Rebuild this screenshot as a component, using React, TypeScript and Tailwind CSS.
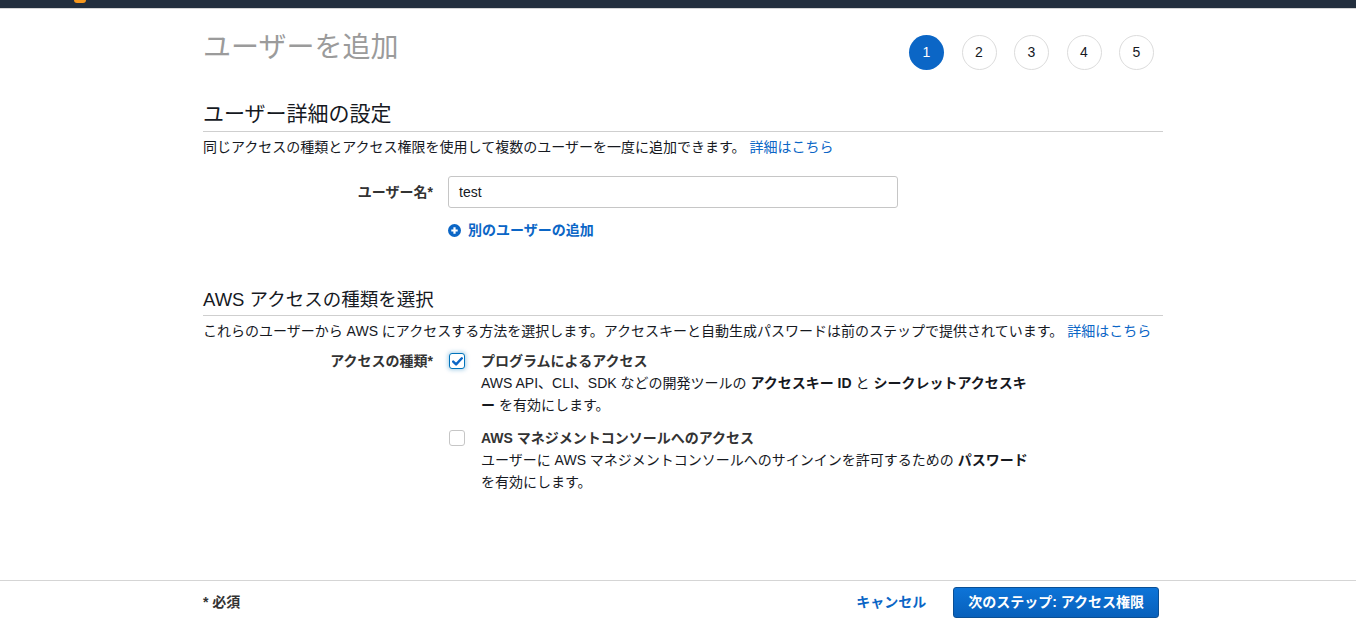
import React from 'react';

const font = { fontFamily: '"Liberation Sans", "Noto Sans CJK JP", sans-serif' };

const Step = ({ n, active }: { n: number; active?: boolean }) => (
  <div
    className={`w-[35px] h-[35px] rounded-full flex items-center justify-center text-[14px] ${
      active ? 'bg-[#0b66c6] text-white' : 'border border-[#dcdcdc] text-[#16191f] bg-white'
    }`}
  >
    {n}
  </div>
);

const Check = ({ checked }: { checked?: boolean }) =>
  checked ? (
    <div className="w-[16px] h-[16px] rounded-[3px] border border-[#0073bb] bg-white flex items-center justify-center shadow-[0_0_4px_1px_rgba(0,115,187,0.35)]">
      <svg width="11" height="9" viewBox="0 0 11 9">
        <path d="M1.2 4.6 L4.1 7.4 L9.8 1.3" fill="none" stroke="#0b66c6" strokeWidth="2.4" strokeLinecap="round" strokeLinejoin="round" />
      </svg>
    </div>
  ) : (
    <div className="w-[16px] h-[16px] rounded-[3px] border border-[#c6c6c6] bg-white" />
  );

export default function App() {
  return (
    <div className="h-[624px] flex flex-col bg-white text-[#16191f]" style={font}>
      {/* top bar */}
      <div className="h-[9px] bg-[#232f3e] border-b border-[#d5d5d5] relative">
        <div className="absolute left-[74px] top-0 w-[12px] h-[3px] rounded-b-full bg-[#f7981d]" />
      </div>

      <div className="flex-1 pl-[203px]">
        <div className="w-[960px]">
          <div className="flex justify-between items-start">
            <h1 className="mt-[22px] text-[28px] leading-[34px] text-[#9b9b9b]">ユーザーを追加</h1>
            <div className="flex gap-[17.5px] mt-[26px] mr-[9px]">
              <Step n={1} active />
              <Step n={2} />
              <Step n={3} />
              <Step n={4} />
              <Step n={5} />
            </div>
          </div>

          <h2 className="mt-[30px] text-[21px] leading-[28px] pb-[3px] border-b border-[#cfcfcf]">ユーザー詳細の設定</h2>
          <p className="mt-[5px] text-[14px] leading-[20px]">
            同じアクセスの種類とアクセス権限を使用して複数のユーザーを一度に追加できます。{' '}
            <span className="text-[#0b66c6]">詳細はこちら</span>
          </p>

          <div className="flex items-center mt-[19px]">
            <div className="w-[230px] text-right font-bold text-[14px] text-[#333]">ユーザー名*</div>
            <div className="ml-[15px] w-[450px] h-[32px] border border-[#c6c6c6] rounded-[3px] flex items-center px-[10px] text-[14px]">
              test
            </div>
          </div>
          <div className="ml-[245px] mt-[12px] flex items-center gap-[7px] text-[14px] font-bold text-[#0b66c6]">
            <svg width="13" height="13" viewBox="0 0 13 13">
              <circle cx="6.5" cy="6.5" r="6.5" fill="#0b66c6" />
              <path d="M6.5 3.3 V9.7 M3.3 6.5 H9.7" stroke="white" strokeWidth="2.2" />
            </svg>
            <span>別のユーザーの追加</span>
          </div>

          <h2 className="mt-[46px] text-[18.5px] leading-[26px] pb-[2px] border-b border-[#cfcfcf]">AWS アクセスの種類を選択</h2>
          <p className="mt-[5px] text-[14px] leading-[20px]">
            これらのユーザーから AWS にアクセスする方法を選択します。アクセスキーと自動生成パスワードは前のステップで提供されています。{' '}
            <span className="text-[#0b66c6]">詳細はこちら</span>
          </p>

          <div className="flex mt-[9px]">
            <div className="w-[230px] text-right font-bold text-[14px] leading-[22px] text-[#333]">アクセスの種類*</div>
            <div className="ml-[16px] flex flex-col gap-[11px]">
              <div className="flex">
                <div className="pt-[3px]"><Check checked /></div>
                <div className="ml-[16px] w-[548px] text-[14px] leading-[22px]">
                  <div className="font-bold text-[#333]">プログラムによるアクセス</div>
                  <div>
                    AWS API、CLI、SDK などの開発ツールの <b>アクセスキー ID</b> と <b>シークレットアクセスキー</b> を有効にします。
                  </div>
                </div>
              </div>
              <div className="flex">
                <div className="pt-[3px]"><Check /></div>
                <div className="ml-[16px] w-[548px] text-[14px] leading-[22px]">
                  <div className="font-bold text-[#333]">AWS マネジメントコンソールへのアクセス</div>
                  <div>
                    ユーザーに AWS マネジメントコンソールへのサインインを許可するための <b>パスワード</b> を有効にします。
                  </div>
                </div>
              </div>
            </div>
          </div>
        </div>
      </div>

      <div className="h-[44px] border-t border-[#d5d5d5] flex items-center pl-[203px]">
        <div className="w-[956px] flex items-center justify-between">
          <div className="text-[14px] font-bold text-[#333]">* 必須</div>
          <div className="flex items-center gap-[27px]">
            <span className="text-[14px] font-bold text-[#0b66c6]">キャンセル</span>
            <button className="h-[31px] px-[14px] rounded-[3px] border border-[#0a4f95] bg-gradient-to-b from-[#0d74d8] to-[#0860bb] text-white text-[14px] font-bold">
              次のステップ: アクセス権限
            </button>
          </div>
        </div>
      </div>
    </div>
  );
}
